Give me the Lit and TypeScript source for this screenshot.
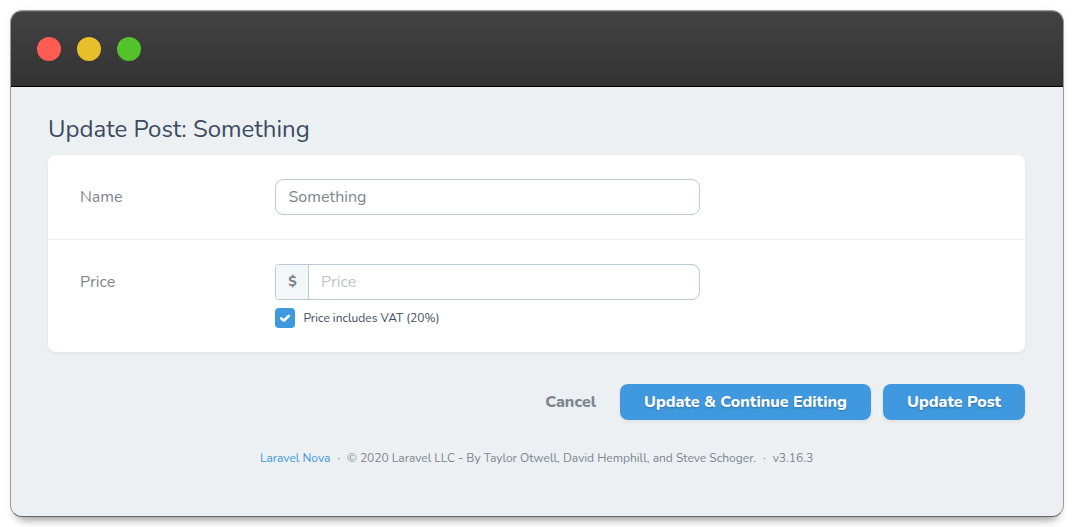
import { LitElement, html, css } from "lit";
import { customElement, property } from "lit/decorators.js";

@customElement("window-frame")
class WindowFrame extends LitElement {
  static styles = css`
    :host {
      display: flex;
      flex-direction: column;
      flex: 1;
      box-sizing: border-box;
      border: 1px solid #999b9d;
      border-bottom-color: #626567;
      border-radius: 12px;
      overflow: hidden;
      background: #ecf0f3;
      box-shadow: 0 9px 10px -7px rgba(0, 0, 0, 0.45), 0 0 12px rgba(0, 0, 0, 0.03);
    }
    .bar {
      height: 76px;
      box-sizing: border-box;
      flex: none;
      display: flex;
      align-items: center;
      gap: 16px;
      padding: 0 26px;
      background: linear-gradient(#424242, #333333);
      border-top: 1px solid #5a5a5a;
      border-bottom: 1px solid #000;
    }
    .dot {
      width: 24px;
      height: 24px;
      border-radius: 50%;
    }
    .close { background: #ff5c54; }
    .minimize { background: #e6bf2b; }
    .zoom { background: #53c22b; }
  `;

  render() {
    return html`
      <div class="bar">
        <span class="dot close"></span>
        <span class="dot minimize"></span>
        <span class="dot zoom"></span>
      </div>
      <slot></slot>
    `;
  }
}

@customElement("form-row")
class FormRow extends LitElement {
  @property() label = "";

  static styles = css`
    :host {
      display: flex;
      padding: 24px 32px;
    }
    .label {
      width: 195px;
      line-height: 36px;
      font-size: 16px;
      color: #7c858e;
    }
    .field { width: 425px; }
  `;

  render() {
    return html`
      <div class="label"><span>${this.label}</span></div>
      <div class="field"><slot></slot></div>
    `;
  }
}

@customElement("app-root")
class AppRoot extends LitElement {
  static styles = css`
    :host {
      display: flex;
      box-sizing: border-box;
      height: 527px;
      padding: 10px;
      background: #fff;
      font-family: "Nunito", "Lato", sans-serif;
      color: #3c4b5f;
    }
    .page { padding: 24px 38px 0 37px; }
    h1 {
      margin: 0 0 8px;
      font-size: 24px;
      line-height: 36px;
      font-weight: 400;
    }
    .card {
      background: #fff;
      border-radius: 8px;
      box-shadow: 0 2px 4px rgba(0, 0, 0, 0.05);
    }
    .divided { border-bottom: 1px solid #eef1f4; }
    .input {
      box-sizing: border-box;
      height: 36px;
      display: flex;
      border: 1px solid #bacad6;
      border-radius: 8px;
      overflow: hidden;
      font-size: 16px;
      line-height: 34px;
      color: #7c858e;
    }
    .value { padding: 0 12.5px; }
    .placeholder { padding: 0 12px; color: #bfc4c9; }
    .prefix {
      width: 32px;
      border-right: 1px solid #bacad6;
      background: #f4f7fa;
      text-align: center;
      font-size: 14px;
      font-weight: 800;
      text-indent: 1px;
    }
    .grouped { border-radius: 4px 8px 8px 4px; }
    .check {
      display: flex;
      align-items: center;
      gap: 8.4px;
      margin-top: 8px;
      height: 20px;
      font-size: 12px;
    }
    .check svg { display: block; }
    .actions {
      display: flex;
      justify-content: flex-end;
      align-items: center;
      margin-top: 32px;
      font-size: 16px;
      font-weight: 800;
      line-height: 36px;
    }
    .cancel {
      color: #7c858e;
      margin-right: 24px;
    }
    .button {
      box-sizing: border-box;
      height: 36px;
      border-radius: 8px;
      background: #4099de;
      color: #fff;
      text-align: center;
      text-shadow: 0 1px 2px rgba(0, 0, 0, 0.25);
      box-shadow: 0 2px 4px rgba(0, 0, 0, 0.06);
    }
    .continue { width: 251px; margin-right: 12px; }
    .update { width: 142px; }
    .footer {
      display: flex;
      justify-content: center;
      gap: 7px;
      margin-top: 29px;
      font-size: 12px;
      line-height: 18px;
      color: #7c858e;
    }
    .link { color: #4099de; }
  `;

  render() {
    return html`
      <window-frame>
        <div class="page">
          <h1><span>Update Post: Something</span></h1>
          <div class="card">
            <form-row class="divided" label="Name">
              <div class="input"><span class="value">Something</span></div>
            </form-row>
            <form-row label="Price">
              <div class="input grouped">
                <span class="prefix">$</span>
                <span class="placeholder">Price</span>
              </div>
              <div class="check">
                <svg width="20" height="20" viewBox="0 0 20 20">
                  <rect width="20" height="20" rx="4" fill="#4099de" />
                  <path d="M6.2 10.4 8.8 12.5 13.8 8" fill="none" stroke="#fff" stroke-width="2.6" stroke-linecap="round" stroke-linejoin="round" />
                </svg>
                <span class="vat">Price includes VAT (20%)</span>
              </div>
            </form-row>
          </div>
          <div class="actions">
            <span class="cancel">Cancel</span>
            <div class="button continue"><span>Update &amp; Continue Editing</span></div>
            <div class="button update"><span>Update Post</span></div>
          </div>
          <div class="footer">
            <span class="link">Laravel Nova</span>
            <span>·</span>
            <span class="copy">© 2020 Laravel LLC - By Taylor Otwell, David Hemphill, and Steve Schoger.</span>
            <span>·</span>
            <span class="version">v3.16.3</span>
          </div>
        </div>
      </window-frame>
    `;
  }
}
